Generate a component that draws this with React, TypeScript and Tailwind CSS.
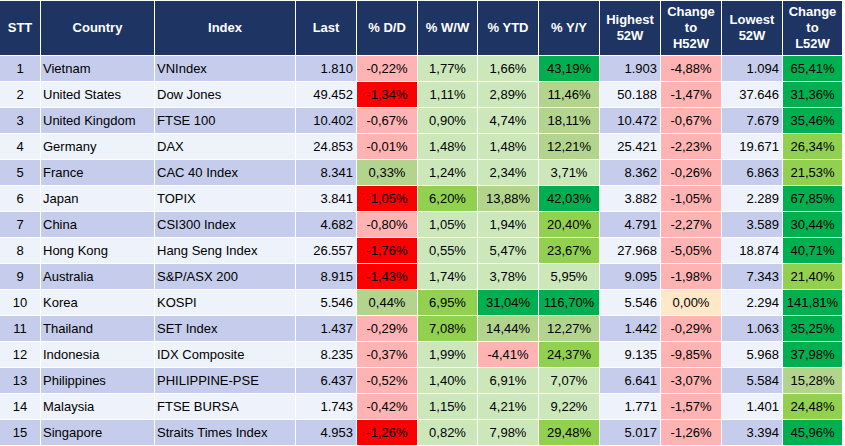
import React from "react";

type C = "p" | "r" | "l" | "m" | "g" | "d" | "o";

const cls: Record<C, string> = {
  p: "bg-[#ffb3b3]",
  r: "bg-[#fa0000]",
  l: "bg-[#cce8bb]",
  m: "bg-[#b2d48d]",
  g: "bg-[#92d050]",
  d: "bg-[#00b050]",
  o: "bg-[#ffe8c8]",
};

type Row = [string, string, string, [string, C], [string, C], [string, C], [string, C], string, [string, C], string, [string, C]];

const rows: Row[] = [
  ["Vietnam", "VNIndex", "1.810", ["-0,22%", "p"], ["1,77%", "l"], ["1,66%", "l"], ["43,19%", "d"], "1.903", ["-4,88%", "p"], "1.094", ["65,41%", "d"]],
  ["United States", "Dow Jones", "49.452", ["-1,34%", "r"], ["1,11%", "l"], ["2,89%", "l"], ["11,46%", "m"], "50.188", ["-1,47%", "p"], "37.646", ["31,36%", "d"]],
  ["United Kingdom", "FTSE 100", "10.402", ["-0,67%", "p"], ["0,90%", "l"], ["4,74%", "l"], ["18,11%", "m"], "10.472", ["-0,67%", "p"], "7.679", ["35,46%", "d"]],
  ["Germany", "DAX", "24.853", ["-0,01%", "p"], ["1,48%", "l"], ["1,48%", "l"], ["12,21%", "m"], "25.421", ["-2,23%", "p"], "19.671", ["26,34%", "g"]],
  ["France", "CAC 40 Index", "8.341", ["0,33%", "m"], ["1,24%", "l"], ["2,34%", "l"], ["3,71%", "l"], "8.362", ["-0,26%", "p"], "6.863", ["21,53%", "g"]],
  ["Japan", "TOPIX", "3.841", ["-1,05%", "r"], ["6,20%", "g"], ["13,88%", "m"], ["42,03%", "d"], "3.882", ["-1,05%", "p"], "2.289", ["67,85%", "d"]],
  ["China", "CSI300 Index", "4.682", ["-0,80%", "p"], ["1,05%", "l"], ["1,94%", "l"], ["20,40%", "g"], "4.791", ["-2,27%", "p"], "3.589", ["30,44%", "d"]],
  ["Hong Kong", "Hang Seng Index", "26.557", ["-1,76%", "r"], ["0,55%", "l"], ["5,47%", "l"], ["23,67%", "g"], "27.968", ["-5,05%", "p"], "18.874", ["40,71%", "d"]],
  ["Australia", "S&P/ASX 200", "8.915", ["-1,43%", "r"], ["1,74%", "l"], ["3,78%", "l"], ["5,95%", "l"], "9.095", ["-1,98%", "p"], "7.343", ["21,40%", "g"]],
  ["Korea", "KOSPI", "5.546", ["0,44%", "m"], ["6,95%", "g"], ["31,04%", "d"], ["116,70%", "d"], "5.546", ["0,00%", "o"], "2.294", ["141,81%", "d"]],
  ["Thailand", "SET Index", "1.437", ["-0,29%", "p"], ["7,08%", "g"], ["14,44%", "m"], ["12,27%", "m"], "1.442", ["-0,29%", "p"], "1.063", ["35,25%", "d"]],
  ["Indonesia", "IDX Composite", "8.235", ["-0,37%", "p"], ["1,99%", "l"], ["-4,41%", "p"], ["24,37%", "g"], "9.135", ["-9,85%", "p"], "5.968", ["37,98%", "d"]],
  ["Philippines", "PHILIPPINE-PSE", "6.437", ["-0,52%", "p"], ["1,40%", "l"], ["6,91%", "l"], ["7,07%", "l"], "6.641", ["-3,07%", "p"], "5.584", ["15,28%", "m"]],
  ["Malaysia", "FTSE BURSA", "1.743", ["-0,42%", "p"], ["1,15%", "l"], ["4,21%", "l"], ["9,22%", "l"], "1.771", ["-1,57%", "p"], "1.401", ["24,48%", "g"]],
  ["Singapore", "Straits Times Index", "4.953", ["-1,26%", "r"], ["0,82%", "l"], ["7,98%", "l"], ["29,48%", "g"], "5.017", ["-1,26%", "p"], "3.394", ["45,96%", "d"]],
];

const headers: string[][] = [
  ["STT"],
  ["Country"],
  ["Index"],
  ["Last"],
  ["% D/D"],
  ["% W/W"],
  ["% YTD"],
  ["% Y/Y"],
  ["Highest", "52W"],
  ["Change", "to", "H52W"],
  ["Lowest", "52W"],
  ["Change", "to", "L52W"],
];

export default function App() {
  return (
    <div
      className="w-[845px] h-[446px] bg-white overflow-hidden pt-px text-[13px] text-black"
      style={{ fontFamily: '"Liberation Sans", Arial, sans-serif' }}
    >
      <div className="grid grid-cols-[40px_113px_140px_60px_60px_59px_60px_60px_60px_60px_60px_59px] grid-rows-[54px] auto-rows-[25px] gap-px w-[842px]">
        {headers.map((h, i) => (
          <div
            key={"h" + i}
            className="bg-[#1e3462] text-white font-bold flex flex-col items-center justify-center leading-[16px] text-center"
          >
            {h.map((t, j) => (
              <span key={j}>{t}</span>
            ))}
          </div>
        ))}
        {rows.map((r, i) => {
          const bg = i % 2 === 0 ? "bg-[#c6cdec]" : "bg-[#eef2fb]";
          const pc = (v: [string, C], k: string) => (
            <div key={k} className={`${cls[v[1]]} flex items-center justify-center`}>
              {v[0]}
            </div>
          );
          return (
            <React.Fragment key={i}>
              <div className={`${bg} flex items-center justify-center`}>{i + 1}</div>
              <div className={`${bg} flex items-center pl-[2px] whitespace-nowrap`}>{r[0]}</div>
              <div className={`${bg} flex items-center pl-[2px] whitespace-nowrap`}>{r[1]}</div>
              <div className={`${bg} flex items-center justify-end pr-[3px]`}>{r[2]}</div>
              {pc(r[3], "a")}
              {pc(r[4], "b")}
              {pc(r[5], "c")}
              {pc(r[6], "d")}
              <div className={`${bg} flex items-center justify-end pr-[3px]`}>{r[7]}</div>
              {pc(r[8], "e")}
              <div className={`${bg} flex items-center justify-end pr-[3px]`}>{r[9]}</div>
              {pc(r[10], "f")}
            </React.Fragment>
          );
        })}
      </div>
    </div>
  );
}
